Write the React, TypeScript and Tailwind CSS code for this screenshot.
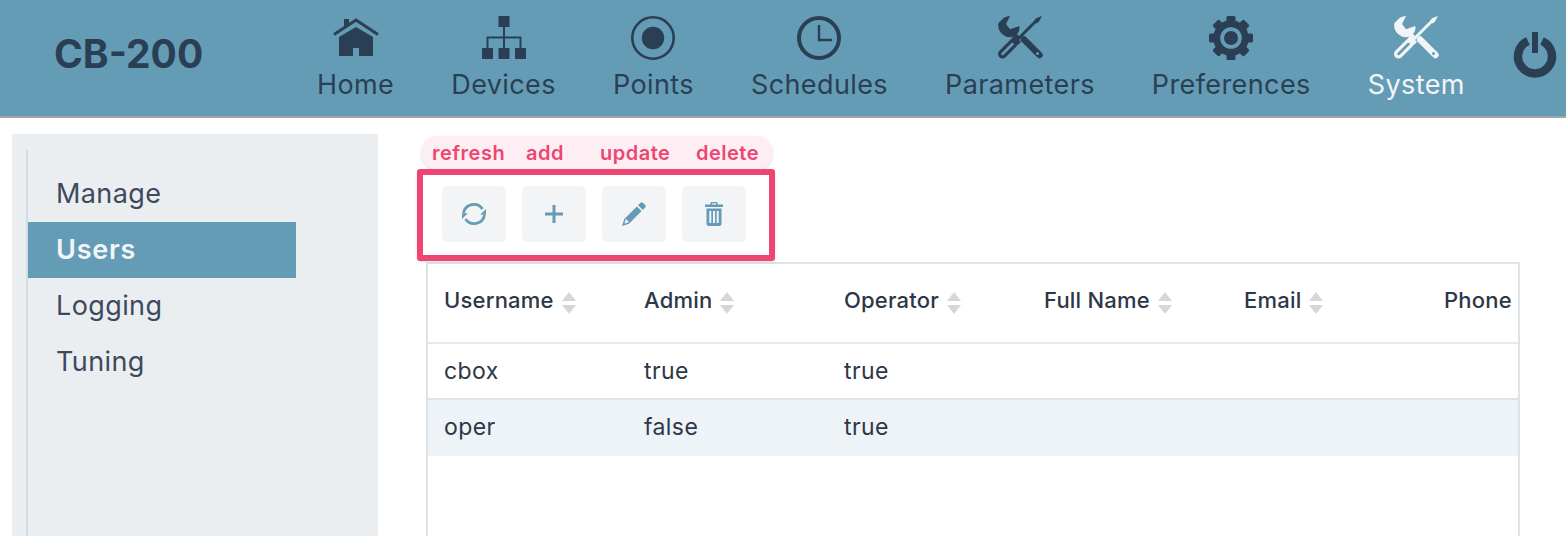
import type { ReactNode } from 'react';

const Svg = ({ w, h, children }: { w: number; h: number; children: ReactNode }) => (
  <svg width={w} height={h} viewBox={`0 0 ${w} ${h}`} fill="currentColor">
    {children}
  </svg>
);

const HomeIcon = () => (
  <Svg w={46} h={44}>
    <path d="M11 3h5v5l-5 4z" />
    <path d="M1 18.5 23 4l22 14.5" fill="none" stroke="currentColor" strokeWidth="3" />
    <path d="M23 11 40 21v19H26v-8h-6v8H6V21z" />
  </Svg>
);

const SitemapIcon = () => (
  <Svg w={44} h={44}>
    <path d="M16.5 0h11v11h-11zM0 32h11v11H0zM16.5 32h11v11h-11zM33 32h11v11H33z" />
    <path d="M22 11v21M5.5 32V21.5h33V32" fill="none" stroke="currentColor" strokeWidth="2" />
  </Svg>
);

const PointsIcon = () => (
  <Svg w={44} h={44}>
    <circle cx="22" cy="22" r="20.7" fill="none" stroke="currentColor" strokeWidth="2.6" />
    <circle cx="22" cy="22" r="11.2" />
  </Svg>
);

const ClockIcon = () => (
  <Svg w={44} h={44}>
    <circle cx="22" cy="22" r="20" fill="none" stroke="currentColor" strokeWidth="4" />
    <path d="M22 9v15h13" fill="none" stroke="currentColor" strokeWidth="2.4" />
  </Svg>
);

const ToolsIcon = () => (
  <Svg w={46} h={44}>
    {/* wrench head and neck */}
    <path d="M13 0 9 8l4 5.3 9.3-3.300c.6 3-.2 5.800-2.300 8l3 3-2.800 2.800-3.400-3.400c-3.400 1.400-7.300 1-10.300-1.400C2.500 16.500.6 12 1.300 7.300L6 2.500C8 1 10.500.2 13 0z" />
    <path d="M27 23.500 42.500 39" fill="none" stroke="currentColor" strokeWidth="6.500" strokeLinecap="round" />
    <circle cx="40.500" cy="37.500" r="1.500" fill="#659cb5" />
    {/* screwdriver shaft, collar, handle */}
    <path d="M38.500 5.500 20 24" fill="none" stroke="currentColor" strokeWidth="3" />
    <path d="M45 0 42 5.500 39.500 7.500 37 5l2-2.800z" />
    <path d="M16 21l6.500 6.500" fill="none" stroke="currentColor" strokeWidth="4.500" />
    <path d="M16.500 27 5.500 38" fill="none" stroke="currentColor" strokeWidth="9" strokeLinecap="round" />
    <path d="M15.500 28 5.500 38" fill="none" stroke="#659cb5" strokeWidth="2.500" strokeLinecap="round" />
  </Svg>
);

const GearIcon = () => (
  <Svg w={44} h={44}>
    {[0, 45, 90, 135, 180, 225, 270, 315].map((deg) => (
      <rect key={deg} x="17.5" y="0" width="9" height="9" rx="1.5" transform={`rotate(${deg} 22 22)`} />
    ))}
    <circle cx="22" cy="22" r="14.3" fill="none" stroke="currentColor" strokeWidth="7" />
    <circle cx="22" cy="22" r="7" />
  </Svg>
);

const PowerIcon = () => (
  <Svg w={44} h={46}>
    <path d="M15 9A17 17 0 1 0 29 9" fill="none" stroke="currentColor" strokeWidth="8.5" />
    <path d="M22 0v21" fill="none" stroke="currentColor" strokeWidth="6" />
  </Svg>
);

const RefreshIcon = () => (
  <Svg w={24} h={24}>
    <path d="M1.500 11A10.500 10.500 0 0 1 20.500 7M22.500 13A10.500 10.500 0 0 1 3.500 17" fill="none" stroke="currentColor" strokeWidth="2.800" />
    <path d="M24 7v5.800h-5.800zM0 17v-5.800h5.800z" />
  </Svg>
);

const PlusIcon = () => (
  <Svg w={24} h={24}>
    <path d="M12 3v18M3 12h18" fill="none" stroke="currentColor" strokeWidth="3" />
  </Svg>
);

const PencilIcon = () => (
  <Svg w={24} h={24}>
    <path d="M18.500.8a1.700 1.700 0 0 1 2.400 0l2.300 2.300a1.700 1.700 0 0 1 0 2.400l-2.400 2.400-4.700-4.700zM14.900 4.400l4.700 4.700L7 21.700l-7 2.300 2.300-7zM3.600 17.400l-1.200 4.200 4.200-1.200-.3-1.600-1.300-.2-.2-1.300z" fillRule="evenodd" />
  </Svg>
);

const TrashIcon = () => (
  <Svg w={18} h={24}>
    <path d="M6 0h6l1 2.500h5V5H0V2.500h5zM7 1.300l-.4 1.200h4.800L11 1.300z" fillRule="evenodd" />
    <path d="M1.500 6.500h15V22a2 2 0 0 1-2 2h-11a2 2 0 0 1-2-2zM4.300 9v12h2V9zM8 9v12h2V9zM11.700 9v12h2V9z" fillRule="evenodd" />
  </Svg>
);

const navItems: { label: string; icon: () => ReactNode; active?: boolean }[] = [
  { label: 'Home', icon: HomeIcon },
  { label: 'Devices', icon: SitemapIcon },
  { label: 'Points', icon: PointsIcon },
  { label: 'Schedules', icon: ClockIcon },
  { label: 'Parameters', icon: ToolsIcon },
  { label: 'Preferences', icon: GearIcon },
  { label: 'System', icon: ToolsIcon, active: true },
];

const sideItems = ['Manage', 'Users', 'Logging', 'Tuning'];
const columns = ['Username', 'Admin', 'Operator', 'Full Name', 'Email', 'Phone'];
const rows = [
  ['cbox', 'true', 'true'],
  ['oper', 'false', 'true'],
];
const hints = [
  { label: 'refresh', cls: 'w-[94px]' },
  { label: 'add', cls: 'w-[74px]' },
  { label: 'update', cls: 'w-[96px]' },
  { label: 'delete', cls: '' },
];
const actions = [RefreshIcon, PlusIcon, PencilIcon, TrashIcon];

function SortArrows() {
  return (
    <svg width="14" height="22" viewBox="0 0 14 22" className="ml-2 mt-[6px]">
      <path d="M7 0 L14 9 L0 9 Z M0 13 L14 13 L7 22 Z" fill="#d5d7dc" />
    </svg>
  );
}

export default function App() {
  return (
    <div className="w-[1566px] h-[536px] overflow-hidden bg-white font-['Inter',sans-serif]">
      {/* top bar */}
      <header className="flex h-[118px] bg-[#659cb5] border-b-2 border-[#a0a5a7] text-[#2a3f54]">
        <div className="w-[288.5px] pl-[54px] pt-[30px] text-[39px] leading-[48px] font-bold">CB-200</div>
        {navItems.map((item) => {
          const Icon = item.icon;
          return (
            <div key={item.label} className={`flex flex-col items-center px-[28.5px] pt-4 ${item.active ? 'text-[#f2f5f7]' : ''}`}>
              <Icon />
              <span className="mt-[9px] text-[27px] leading-[32px] tracking-[0.4px]">{item.label}</span>
            </div>
          );
        })}
        <div className="pl-5 pt-[32px]">
          <PowerIcon />
        </div>
      </header>

      <div className="flex">
        {/* sidebar */}
        <aside className="ml-3 mt-4 w-[366px] h-[402px] bg-[#ebeef1] pl-[14px] pt-4">
          <ul className="h-full w-[270px] border-l-2 border-[#d5dce2] pt-4">
            {sideItems.map((name) => (
              <li
                key={name}
                className={`h-14 pl-[28px] text-[27px] leading-[56px] ${name === 'Users' ? 'bg-[#659cb5] text-[#f2f5f7] font-semibold tracking-[0.8px]' : 'text-[#3d4a5c] tracking-[0.4px]'}`}
              >
                {name}
              </li>
            ))}
          </ul>
        </aside>

        {/* users panel */}
        <main className="relative ml-[48px] w-[1094px] pt-[144px]">
          <div className="absolute left-[-5px] top-[18px] z-10 flex h-[34px] w-[352px] items-center rounded-[17px] bg-[#fdeef3] pl-[11px] text-[20px] font-semibold tracking-[0.5px] text-[#ee4671] shadow-sm">
            {hints.map((h) => (
              <span key={h.label} className={h.cls}>{h.label}</span>
            ))}
          </div>
          <div className="absolute left-[-9px] top-[51px] z-10 flex h-[92px] w-[358px] items-center gap-4 rounded-[3px] border-[6px] border-[#ee4671] pb-[2px] pl-[19px] shadow-sm">
            {actions.map((Icon, i) => (
              <button key={i} className="flex h-14 w-16 items-center justify-center rounded-md bg-[#f3f4f6] text-[#659cb5]">
                <Icon />
              </button>
            ))}
          </div>

          <div className="h-[274px] overflow-hidden border-x-2 border-t-2 border-[#dfe3e8] text-[#2d3748]">
            <div className="flex h-20 border-b-2 border-[#e6eaee] pt-[22px] text-[22px] font-medium tracking-[0.2px]">
              {columns.map((c) => (
                <div key={c} className="flex w-[200px] shrink-0 items-start pl-4 leading-7">
                  {c}
                  {c !== 'Phone' && <SortArrows />}
                </div>
              ))}
            </div>
            {rows.map((r, i) => (
              <div key={r[0]} className={`flex h-14 items-center text-[23px] tracking-[0.4px] ${i === 0 ? 'border-b-2 border-[#dfe3e8]' : 'bg-[#eef3f7] pb-[2px]'}`}>
                {r.map((v, j) => (
                  <div key={j} className="w-[200px] pl-4">{v}</div>
                ))}
              </div>
            ))}
          </div>
        </main>
      </div>
    </div>
  );
}
